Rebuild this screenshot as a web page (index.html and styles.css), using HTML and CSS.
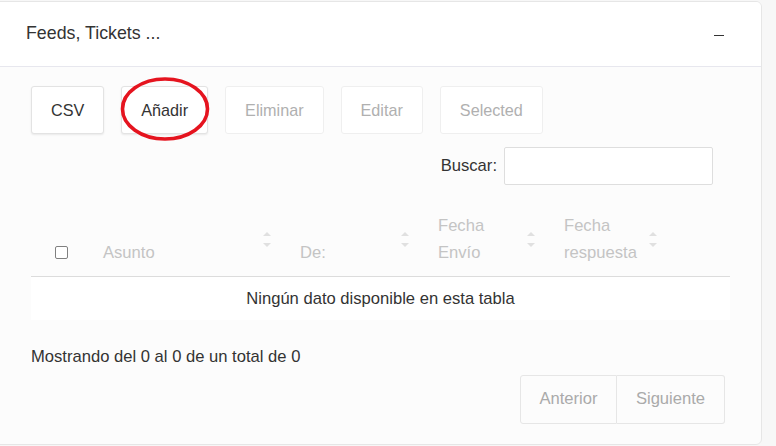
FILE: index.html
```html
<!DOCTYPE html>
<html lang="es">
<head>
    <meta charset="UTF-8">
    <title>Feeds, Tickets</title>
    <link rel="stylesheet" href="styles.css">
</head>
<body>
    <div class="card">
        <div class="cardHead">
            <span class="cardTitle">Feeds, Tickets ...</span>
            <span class="collapse"></span>
        </div>
        <div class="cardBody">
            <div class="tools">
                <button type="button" class="btn">CSV</button>
                <span class="mark">
                    <button type="button" class="btn">Añadir</button>
                    <svg class="ring" width="96" height="70" viewBox="0 0 96 70">
                        <ellipse cx="48" cy="35" rx="42.5" ry="30" fill="none" stroke="#e5141f" stroke-width="3.6"/>
                    </svg>
                </span>
                <button type="button" class="btn off">Eliminar</button>
                <button type="button" class="btn off">Editar</button>
                <button type="button" class="btn off">Selected</button>
            </div>
            <div class="search">
                <label for="buscar">Buscar:</label>
                <input id="buscar" type="text">
            </div>
            <table class="grid">
                <thead>
                    <tr>
                        <th class="colCheck"><input type="checkbox" class="chk"></th>
                        <th class="sort colA">Asunto</th>
                        <th class="sort colB">De:</th>
                        <th class="sort colC">Fecha<br>Envío</th>
                        <th class="sort colD">Fecha<br>respuesta</th>
                        <th></th>
                    </tr>
                </thead>
                <tbody>
                    <tr>
                        <td class="empty" colspan="6">Ningún dato disponible en esta tabla</td>
                    </tr>
                </tbody>
            </table>
            <p class="info">Mostrando del 0 al 0 de un total de 0</p>
            <div class="pager">
                <button type="button" class="pg first">Anterior</button>
                <button type="button" class="pg last">Siguiente</button>
            </div>
        </div>
    </div>
</body>
</html>
```

FILE: styles.css
```css
*{
    box-sizing: border-box;
}
body{
    margin: 0;
    background: #f7f7f7;
    font-family: "Liberation Sans", Arial, sans-serif;
    font-size: 16.6px;
    color: #333;
}
.card{
    margin: 1px 14px 0 -1px;
    height: 444px;
    border: 1px solid #e6e6e6;
    border-radius: 0 6px 6px 0;
    background: #fcfcfc;
    overflow: hidden;
}
.cardHead{
    height: 65px;
    display: flex;
    align-items: center;
    justify-content: space-between;
    padding: 0 37px 0 26px;
    background: #fff;
    border-bottom: 1px solid #e7e7ee;
}
.cardTitle{
    font-size: 17.8px;
    margin-top: -1px;
}
.collapse{
    width: 10px;
    height: 1px;
    background: #333;
    margin-top: 2px;
}
.cardBody{
    padding: 19px 31px 0 31px;
}
.tools{
    display: flex;
    gap: 17px;
}
.btn{
    height: 48px;
    padding: 0 19px;
    font: inherit;
    font-size: 16.2px;
    color: #333;
    background: #fff;
    border: 1px solid #e3e3e3;
    border-radius: 3px;
    box-shadow: 0 1px 2px rgba(0,0,0,.08);
}
.btn.off{
    color: #b0b0b0;
    border-color: #efefef;
    box-shadow: none;
}
.mark{
    position: relative;
    display: flex;
}
.ring{
    position: absolute;
    left: 50%;
    top: 50%;
    margin: -36px 0 0 -48px;
    pointer-events: none;
}
.search{
    display: flex;
    justify-content: flex-end;
    align-items: center;
    margin-top: 13px;
    padding-right: 17px;
}
.search label{
    margin-right: 7px;
}
.search input{
    width: 209px;
    height: 38px;
    border: 1px solid #dedede;
    border-radius: 2px;
    background: #fff;
    outline: none;
}
.grid{
    width: 100%;
    margin-top: 17px;
    border-collapse: collapse;
}
.grid th{
    position: relative;
    padding: 10px 19px 10px 10px;
    text-align: left;
    vertical-align: bottom;
    font-weight: normal;
    line-height: 27px;
    color: #c4c4c4;
    border-bottom: 1px solid #dcdcdc;
}
.colCheck{
    width: 62px;
}
.grid th.colCheck{
    text-align: center;
    padding: 0 0 17px 0;
}
.colA{
    width: 197px;
}
.colB{
    width: 138px;
}
.colC{
    width: 126px;
}
.colD{
    width: 122px;
}
.chk{
    appearance: none;
    display: block;
    margin: 0 0 0 24px;
    width: 13px;
    height: 13px;
    border: 1px solid #808080;
    border-radius: 2px;
    background: #fff;
}
.sort::before,.sort::after{
    content: "";
    position: absolute;
    right: 19px;
    border-left: 4px solid transparent;
    border-right: 4px solid transparent;
}
.sort::before{
    top: calc(50% - 7px);
    border-bottom: 4px solid #e0e0e0;
}
.sort::after{
    top: calc(50% + 4px);
    border-top: 4px solid #e0e0e0;
}
.empty{
    height: 43px;
    padding-top: 2px;
    text-align: center;
    background: #fff;
}
.info{
    margin: 27px 0 0 0;
}
.pager{
    display: flex;
    justify-content: flex-end;
    margin-top: 8px;
    padding-right: 5px;
}
.pg{
    height: 49px;
    font: inherit;
    color: #aaa;
    background: #fcfcfc;
    border: 1px solid #e6e6e6;
}
.first{
    width: 97px;
    border-radius: 3px 0 0 3px;
}
.last{
    width: 108px;
    border-left: none;
    border-radius: 0 3px 3px 0;
}
```
